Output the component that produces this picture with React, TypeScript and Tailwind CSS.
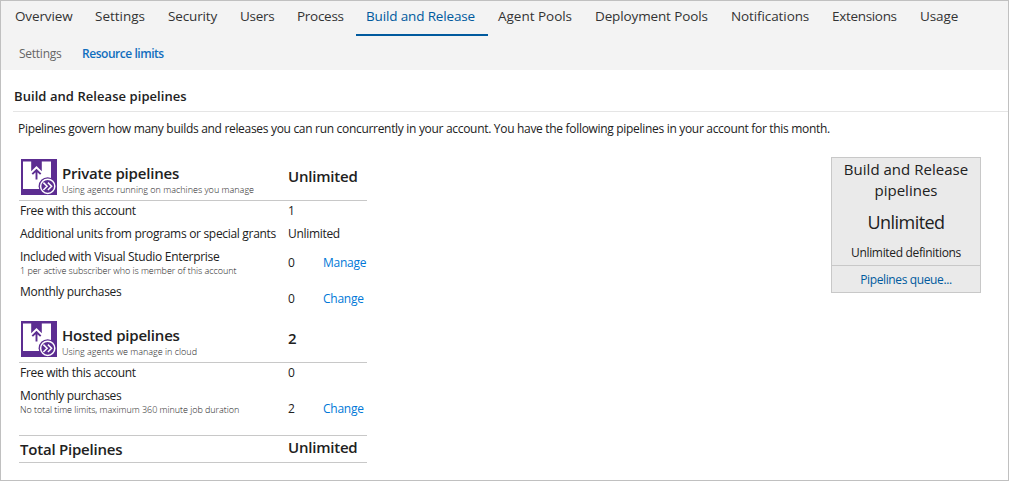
import React from "react";

const tabs = [
  { label: "Overview", cls: "w-[80px] tracking-[-0.13px]" },
  { label: "Settings", cls: "w-[73px] tracking-[-0.02px]" },
  { label: "Security", cls: "w-[72px] tracking-[-0.13px]" },
  { label: "Users", cls: "w-[57px] tracking-[-0.25px]" },
  { label: "Process", cls: "w-[69px] tracking-[-0.28px]" },
  { label: "Build and Release", cls: "w-[132px] tracking-[-0.15px]", active: true },
  { label: "Agent Pools", cls: "w-[97px] tracking-[-0.02px]" },
  { label: "Deployment Pools", cls: "w-[136px] tracking-[-0.13px]" },
  { label: "Notifications", cls: "w-[101px] tracking-[-0.1px]" },
  { label: "Extensions", cls: "w-[88px] tracking-[-0.32px]" },
  { label: "Usage", cls: "w-[60px] tracking-[-0.1px]" },
];

function PipelineIcon() {
  return (
    <svg className="block h-9 w-9 shrink-0" viewBox="0 0 36 36">
      <rect width="36" height="36" fill="#5c2d91" />
      <path d="M2 2.6h8.2v9.6L15.5 7l5.3 5.2V2.6H30v27.4H2z" fill="#fff" />
      <path d="M15.5 10.5v10M11.3 15.2l4.2-4.2 4.2 4.2" fill="none" stroke="#5c2d91" strokeWidth="1.9" />
      <circle cx="26.7" cy="27.3" r="9.1" fill="#5c2d91" />
      <circle cx="26.7" cy="27.3" r="7.1" fill="none" stroke="#fff" strokeWidth="1.5" />
      <path d="M22.4 23.6l3.7 3.7-3.7 3.7M26.9 23.6l3.7 3.7-3.7 3.7" fill="none" stroke="#fff" strokeWidth="1.5" />
    </svg>
  );
}

function GroupHeader({ title, note, value }: { title: string; note: string; value: string }) {
  return (
    <div className="flex h-[42px] border-b border-[#c8c8c8] pl-0.5">
      <PipelineIcon />
      <div className="w-[231px] pl-[5px] pt-[4px]">
        <div className="text-[15px] leading-[20px] font-semibold tracking-[-0.2px]">{title}</div>
        <div className="mt-px text-[9px] leading-[12px] font-light tracking-[0.01px]">{note}</div>
      </div>
      <div className="pt-[7px] text-[15px] leading-[20px] font-semibold tracking-[-0.2px]">{value}</div>
    </div>
  );
}

function Row({ label, note, value, link, cls, valueCls = "" }: { label: string; note?: string; value: string; link?: string; cls: string; valueCls?: string }) {
  return (
    <div className={`flex text-[12px] leading-[16px] tracking-[-0.31px] ${cls}`}>
      <div className="w-[269px] pl-px">
        <div>{label}</div>
        {note && <div className="text-[9px] leading-[12px] font-light tracking-[-0.04px]">{note}</div>}
      </div>
      <div className={`w-[35px] ${valueCls}`}>{value}</div>
      {link && <a className={`text-[#0078d7] tracking-[-0.26px] ${valueCls}`}>{link}</a>}
    </div>
  );
}

export default function App() {
  return (
    <div className="flex h-[481px] w-[1009px] flex-col overflow-hidden border border-[#c0c0c0] bg-white font-['Open_Sans',sans-serif] text-[#212121] whitespace-nowrap">
      <header className="h-[69px] bg-[#f3f3f3]">
        <nav className="flex h-[35px] pl-[4px] text-[13.5px] leading-[30px]">
          {tabs.map((t) => (
            <a key={t.label} className={`block shrink-0 pl-[10px] ${t.cls} ${t.active ? "border-b-2 border-[#005a9e] text-[#005a9e]" : "text-[#333]"}`}>
              {t.label}
            </a>
          ))}
        </nav>
        <div className="flex pl-[18px] pt-[10px] text-[12px] leading-[16px]">
          <a className="w-[63px] tracking-[-0.25px] text-[#666]">Settings</a>
          <a className="font-semibold tracking-[-0.46px] text-[#106ebe]">Resource limits</a>
        </div>
      </header>
      <h1 className="ml-3 h-[42px] border-b border-[#e5e5e5] pl-px pt-[16px] text-[13px] leading-[20px] font-semibold tracking-[0.06px]">
        Build and Release pipelines
      </h1>
      <p className="pl-[17px] pt-[9px] text-[12px] leading-[16px] tracking-[-0.31px]">
        Pipelines govern how many builds and releases you can run concurrently in your account. You have the following pipelines in your account for this month.
      </p>
      <main className="flex justify-between pl-[18px] pr-[27px] pt-[20px]">
        <section className="w-[348px] pt-[2px]">
          <GroupHeader title="Private pipelines" note="Using agents running on machines you manage" value="Unlimited" />
          <Row cls="h-[23px] pt-[2px]" label="Free with this account" value="1" />
          <Row cls="h-[23px] pt-[2px]" label="Additional units from programs or special grants" value="Unlimited" />
          <Row cls="h-[35px] pt-[2px]" label="Included with Visual Studio Enterprise" note="1 per active subscriber who is member of this account" value="0" link="Manage" valueCls="pt-[6px]" />
          <Row cls="h-[39px] pt-[2px]" label="Monthly purchases" value="0" link="Change" valueCls="pt-[7px]" />
          <GroupHeader title="Hosted pipelines" note="Using agents we manage in cloud" value="2" />
          <Row cls="h-[23px] pt-[2px]" label="Free with this account" value="0" />
          <Row cls="h-[49px] pt-[2px]" label="Monthly purchases" note="No total time limits, maximum 360 minute job duration" value="2" link="Change" valueCls="pt-[13px]" />
          <div className="flex h-[28px] border-y border-[#c8c8c8] pl-px text-[15px] leading-[20px] font-semibold tracking-[-0.22px]">
            <div className="w-[268px] pt-[3px]">Total Pipelines</div>
            <div className="pt-px">Unlimited</div>
          </div>
        </section>
        <aside className="flex h-[136px] w-[150px] flex-col border border-[#c8c8c8] bg-[#eaeaea] text-center">
          <div className="pt-px text-[15px] leading-[21px] tracking-[0.02px]">
            Build and Release
            <br />
            pipelines
          </div>
          <div className="pt-[9px] text-[18px] leading-[24px] tracking-[-0.55px]">Unlimited</div>
          <div className="h-[32px] border-b border-[#c8c8c8] pt-[11px] text-[12px] leading-[16px] tracking-[-0.33px]">Unlimited definitions</div>
          <a className="pt-[6px] text-[12px] leading-[16px] tracking-[-0.38px] text-[#005a9e]">Pipelines queue...</a>
        </aside>
      </main>
    </div>
  );
}
